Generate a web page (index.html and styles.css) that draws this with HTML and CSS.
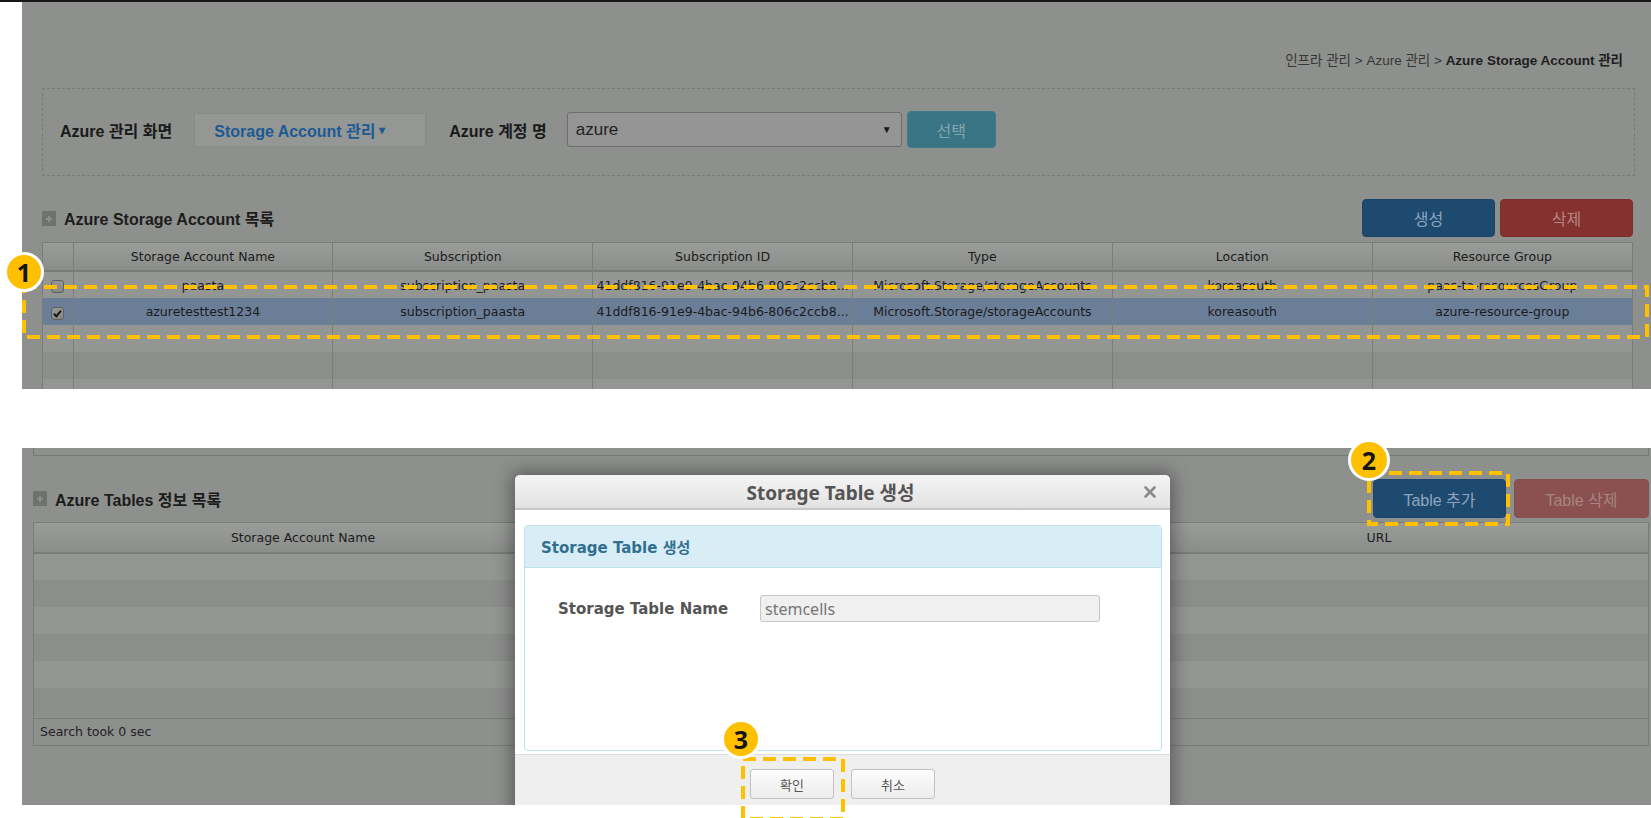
FILE: index.html
```html
<!DOCTYPE html>
<html lang="ko">
<head>
<meta charset="utf-8">
<title>Azure Storage Account 관리</title>
<link rel="stylesheet" href="styles.css">
</head>
<body>
<div class="page">
  <section class="shot shot-top">
    <div class="breadcrumb">인프라 관리 &gt; Azure 관리 &gt; <b>Azure Storage Account 관리</b></div>
    <div class="filter">
      <span class="flabel flabel-1">Azure 관리 화면</span>
      <span class="menu-btn">Storage Account 관리<span class="caret">▾</span></span>
      <span class="flabel flabel-2">Azure 계정 명</span>
      <span class="select"><span class="sel-val">azure</span><span class="sel-arrow">▼</span></span>
      <span class="btn btn-info">선택</span>
    </div>
    <div class="section-head">
      <h2 class="section-title"><span class="plus-icon"></span>Azure Storage Account 목록</h2>
      <div class="btns">
        <span class="btn btn-primary btn-lg btn-top">생성</span>
        <span class="btn btn-danger btn-lg btn-top">삭제</span>
      </div>
    </div>
    <div class="grid-box">
      <table class="grid">
        <colgroup><col class="c-check"><col><col><col><col><col><col></colgroup>
        <thead>
          <tr><th></th><th>Storage Account Name</th><th>Subscription</th><th>Subscription ID</th><th>Type</th><th>Location</th><th>Resource Group</th></tr>
        </thead>
        <tbody>
          <tr class="odd"><td><span class="cb"></span></td><td>paasta</td><td>subscription_paasta</td><td>41ddf816-91e9-4bac-94b6-806c2ccb8...</td><td>Microsoft.Storage/storageAccounts</td><td>koreasouth</td><td>paas-ta-resourcesGroup</td></tr>
          <tr class="selected"><td><span class="cb checked"><svg viewBox="0 0 13 13" width="13" height="13"><path d="M3 6.8 L5.4 9.3 L10 3.6" fill="none" stroke="#151515" stroke-width="2"/></svg></span></td><td>azuretesttest1234</td><td>subscription_paasta</td><td>41ddf816-91e9-4bac-94b6-806c2ccb8...</td><td>Microsoft.Storage/storageAccounts</td><td>koreasouth</td><td>azure-resource-group</td></tr>
          <tr class="odd"><td></td><td></td><td></td><td></td><td></td><td></td><td></td></tr>
          <tr class="even"><td></td><td></td><td></td><td></td><td></td><td></td><td></td></tr>
          <tr class="odd"><td></td><td></td><td></td><td></td><td></td><td></td><td></td></tr>
        </tbody>
      </table>
    </div>
  </section>

  <div class="shot-gap"></div>

  <section class="shot shot-bottom">
    <div class="prev-box"></div>
    <div class="section-head section-head-2">
      <h2 class="section-title"><span class="plus-icon"></span>Azure Tables 정보 목록</h2>
      <div class="btns btns-2">
        <span class="btn btn-primary btn-lg btn-add">Table 추가</span>
        <span class="btn btn-danger-off btn-lg btn-del">Table 삭제</span>
      </div>
    </div>
    <div class="grid-box grid-box-2">
      <table class="grid grid-2">
        <thead>
          <tr><th>Storage Account Name</th><th>Table Name</th><th>URL</th></tr>
        </thead>
        <tbody>
          <tr class="odd"><td></td><td></td><td></td></tr>
          <tr class="even"><td></td><td></td><td></td></tr>
          <tr class="odd"><td></td><td></td><td></td></tr>
          <tr class="even"><td></td><td></td><td></td></tr>
          <tr class="odd"><td></td><td></td><td></td></tr>
          <tr class="even"><td></td><td></td><td></td></tr>
        </tbody>
      </table>
      <div class="grid-footer">Search took 0 sec</div>
    </div>

    <div class="modal">
      <div class="modal-header">
        <span class="modal-title">Storage Table 생성</span>
        <span class="modal-close"><svg viewBox="0 0 12 12" width="12" height="12"><path d="M1.5 1.5 L10.5 10.5 M10.5 1.5 L1.5 10.5" stroke="#8a8a8a" stroke-width="2.6" stroke-linecap="round"/></svg></span>
      </div>
      <div class="modal-body">
        <div class="panel">
          <div class="panel-heading">Storage Table 생성</div>
          <div class="panel-body">
            <label class="form-label">Storage Table Name</label>
            <span class="form-input">stemcells</span>
          </div>
        </div>
      </div>
      <div class="modal-footer">
        <span class="mbtn">확인</span>
        <span class="mbtn">취소</span>
      </div>
    </div>
  </section>

  <svg class="annot" width="1651" height="818" viewBox="0 0 1651 818">
    <rect x="24" y="287" width="1623" height="50" fill="none" stroke="#ffc000" stroke-width="4" stroke-dasharray="13 7"/>
    <rect x="1369" y="473" width="139" height="51" fill="none" stroke="#ffc000" stroke-width="4" stroke-dasharray="13 7"/>
    <rect x="743" y="759" width="100" height="60" fill="none" stroke="#ffc000" stroke-width="4" stroke-dasharray="13 7"/>
  </svg>
  <span class="marker marker-1">1</span>
  <span class="marker marker-2">2</span>
  <span class="marker marker-3">3</span>
</div>
</body>
</html>
```

FILE: styles.css
```css
* { box-sizing: border-box; margin: 0; padding: 0; }
html, body { background: #fff; }
body {
  width: 1651px;
  height: 818px;
  overflow: hidden;
  font-family: "Liberation Sans", "Noto Sans CJK KR", sans-serif;
  color: #1b1b1b;
}
.page {
  position: relative;
  width: 1651px;
  height: 818px;
  border-top: 2px solid #161616;
}

/* screenshot panels */
.shot {
  position: relative;
  background: #8e908e;
  margin-left: 22px;
  overflow: hidden;
}
.shot-top {
  height: 387px;
  padding: 51px 18px 0 20px;
}
.shot-gap { height: 59px; }
.shot-bottom {
  height: 357px;
  padding: 0 2px 0 11px;
}

.breadcrumb {
  text-align: right;
  font-size: 13.5px;
  line-height: 16px;
  color: #363636;
  padding-right: 10px;
}
.breadcrumb b { color: #1e1e1e; }

.filter {
  margin-top: 19px;
  margin-right: -2px;
  height: 88px;
  border: 1px dashed #7a7c7a;
  display: flex;
  align-items: center;
  padding: 0 0 5px 17px;
}
.flabel {
  font-size: 16px;
  font-weight: bold;
  color: #1a1a1a;
}
.flabel-1 { margin-right: 22px; }
.flabel-2 { margin-right: 20px; }
.menu-btn {
  width: 232px;
  height: 34px;
  margin-right: 23px;
  background: #959795;
  border: 1px solid #898b89;
  display: flex;
  align-items: center;
  padding-left: 19px;
  font-size: 16px;
  font-weight: bold;
  color: #1c5a93;
}
.caret { font-size: 12px; margin-left: 3px; }
.select {
  width: 335px;
  height: 35px;
  margin-right: 5px;
  background: #959595;
  border: 1px solid #6c6e6c;
  border-radius: 3px;
  display: flex;
  align-items: center;
  justify-content: space-between;
  padding: 0 9px 0 8px;
  font-size: 17px;
  color: #222;
}
.sel-arrow { font-size: 10px; color: #1a1a1a; }

.btn {
  display: inline-flex;
  align-items: center;
  justify-content: center;
  border-radius: 4px;
  font-size: 15px;
}
.btn-info {
  width: 89px;
  height: 37px;
  background: #3a7585;
  border: 1px solid #3b7d8e;
  color: #85a6b0;
  font-size: 16px;
}
.btn-lg { height: 38px; font-size: 16px; }
.btn-primary { background: #1f4a70; border: 1px solid #1d456a; color: #8ea6be; }
.btn-danger { background: #84312f; border: 1px solid #7c2e2c; color: #b48583; }
.btn-danger-off { background: #8a5150; border: 1px solid #875050; color: #a88482; }
.btn-top { width: 133px; }

.section-head {
  margin-top: 23px;
  height: 38px;
  display: flex;
  align-items: center;
  justify-content: space-between;
}
.section-title {
  display: flex;
  align-items: center;
  font-size: 16px;
  font-weight: bold;
  color: #1c1c1c;
}
.plus-icon {
  position: relative;
  width: 14px;
  height: 15px;
  margin-right: 8px;
  background: #707270;
}
.plus-icon::before,
.plus-icon::after {
  content: "";
  position: absolute;
  background: #8c8e8c;
}
.plus-icon::before { left: 4px; top: 7px; width: 6px; height: 2px; }
.plus-icon::after { left: 6px; top: 5px; width: 2px; height: 6px; }
.btns { display: flex; gap: 5px; }

/* grids */
.grid-box {
  margin-top: 5px;
  border: 1px solid #7a7c7a;
}
.grid {
  width: 100%;
  border-collapse: collapse;
  table-layout: fixed;
  font-family: "DejaVu Sans", "Noto Sans CJK KR", sans-serif;
  font-size: 12.5px;
  color: #1b1b1b;
}
.c-check { width: 30px; }
.grid th {
  height: 28px;
  font-weight: normal;
  background: linear-gradient(#9a9c9a, #8b8d8b);
  border-left: 1px solid #7c7e7c;
  border-bottom: 2px solid #7a7c7a;
  text-align: center;
}
.grid th:first-child, .grid td:first-child { border-left: none; }
.grid td {
  height: 27px;
  border-left: 1px solid #7c7e7c;
  text-align: center;
  white-space: nowrap;
  overflow: hidden;
}
.grid tr.odd td { background: #949694; }
.grid tr.even td { background: #8c8e8c; }
.grid tr.selected td { background: #6a7e98; }
.cb {
  display: inline-block;
  width: 13px;
  height: 13px;
  margin-top: 3px;
  border: 1px solid #5f615f;
  border-radius: 3px;
  background: linear-gradient(#959795, #868886);
  vertical-align: middle;
}
.cb svg { display: block; margin: -1px 0 0 -1px; }

.prev-box {
  height: 8px;
  border: 1px solid #767876;
  border-top: none;
}
.section-head-2 { margin-top: 23px; height: 39px; }
.btns-2 { gap: 8px; }
.btn-add { width: 133px; height: 39px; }
.btn-del { width: 135px; height: 39px; }

.grid-box-2 { margin-top: 4px; }
.grid-2 th { height: 30px; border-left: none; }
.grid-2 td { height: 27px; border-left: none; }
.grid-footer {
  margin-top: 3px;
  border-top: 1px solid #7a7c7a;
  height: 27px;
  line-height: 26px;
  padding-left: 6px;
  font-family: "DejaVu Sans", "Noto Sans CJK KR", sans-serif;
  font-size: 12.5px;
  color: #222;
}

/* modal */
.modal {
  position: absolute;
  left: 493px;
  top: 27px;
  width: 655px;
  height: 345px;
  background: #fff;
  border-radius: 5px 5px 0 0;
  box-shadow: 0 0 18px 3px rgba(0, 0, 0, 0.38);
  display: flex;
  flex-direction: column;
}
.modal-header {
  position: relative;
  height: 35px;
  flex: none;
  border-radius: 5px 5px 0 0;
  background: linear-gradient(#f5f5f5, #e2e2e2);
  border-bottom: 2px solid #c7c7c7;
  display: flex;
  align-items: center;
  justify-content: center;
  padding-right: 24px;
}
.modal-title {
  font-family: "Noto Sans", "Noto Sans CJK KR", sans-serif;
  font-size: 19px;
  font-weight: bold;
  color: #555;
}
.modal-close {
  position: absolute;
  right: 14px;
  top: 11px;
  width: 12px;
  height: 12px;
}
.modal-close svg { display: block; }
.modal-body {
  flex: none;
  height: 244px;
  padding: 15px 8px 3px 9px;
}
.panel {
  height: 100%;
  border: 1px solid #bde2ee;
  border-radius: 4px;
  overflow: hidden;
}
.panel-heading {
  height: 42px;
  background: #d9edf7;
  border-bottom: 1px solid #bde2ee;
  display: flex;
  align-items: center;
  padding-left: 16px;
  font-family: "DejaVu Sans", "Noto Sans CJK KR", sans-serif;
  font-size: 15px;
  font-weight: bold;
  color: #31708f;
}
.panel-body {
  display: flex;
  align-items: center;
  padding: 27px 0 0 33px;
}
.form-label {
  width: 202px;
  font-family: "DejaVu Sans", "Noto Sans CJK KR", sans-serif;
  font-size: 15px;
  font-weight: bold;
  color: #555;
}
.form-input {
  width: 340px;
  height: 27px;
  background: #f0f0f0;
  border: 1px solid #c6c6c6;
  border-radius: 3px;
  display: flex;
  align-items: center;
  padding-left: 4px;
  font-family: "Noto Sans", sans-serif;
  font-size: 16px;
  color: #777;
}
.modal-footer {
  flex: 1;
  background: #efefef;
  border-top: 1px solid #dedede;
  display: flex;
  justify-content: center;
  gap: 17px;
  padding-top: 14px;
}
.mbtn {
  width: 84px;
  height: 30px;
  background: linear-gradient(#fdfdfd, #ececec);
  border: 1px solid #c2c2c2;
  border-radius: 3px;
  display: flex;
  align-items: center;
  justify-content: center;
  font-size: 13px;
  color: #555;
}

/* annotations */
.annot {
  position: absolute;
  left: 0;
  top: -2px;
  pointer-events: none;
}
.marker {
  position: absolute;
  width: 40px;
  height: 40px;
  border-radius: 50%;
  background: #ffc000;
  border: 3px solid #fff;
  display: flex;
  align-items: center;
  justify-content: center;
  font-family: "Open Sans", sans-serif;
  font-weight: bold;
  font-size: 25px;
  color: #151515;
  line-height: 1;
}
.marker-1 { left: 4px; top: 250px; }
.marker-2 { left: 1348px; top: 437px; width: 42px; height: 42px; }
.marker-3 { left: 721px; top: 717px; }
```
